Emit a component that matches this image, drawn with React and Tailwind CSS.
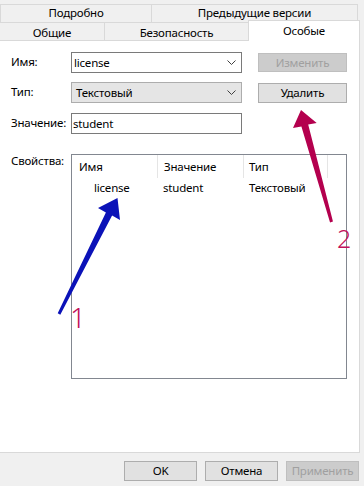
import React from "react";

function Chevron() {
  return (
    <svg width="9" height="5" viewBox="0 0 9 5" className="ml-auto mr-[5px] shrink-0">
      <polyline points="0.5,0.5 4.5,4.5 8.5,0.5" fill="none" stroke="#404040" strokeWidth="1" />
    </svg>
  );
}

export default function App() {
  return (
    <div className="relative w-[364px] h-[486px] bg-[#f0f0f0] overflow-hidden text-[11.5px] tracking-[-0.2px] leading-none text-black font-['Noto_Sans',sans-serif]">
      {/* Tabs */}
      <div className="pt-[4px]">
        <div className="flex h-[19px]">
          <div className="w-[152px] border border-[#d9d9d9] flex items-center justify-center pb-[1px]">Подробно</div>
          <div className="w-[206px] border border-l-0 border-[#d9d9d9] flex items-center justify-center pb-[1px]">Предыдущие версии</div>
        </div>
        <div className="flex h-[17px]">
          <div className="w-[105px] border-r border-[#d9d9d9] flex items-center justify-center pt-[2px]">Общие</div>
          <div className="w-[143px] flex items-center justify-center pt-[2px]">Безопасность</div>
          <div className="relative z-10 w-[112px] h-[21px] -mt-[3px] bg-white border border-b-0 border-[#d9d9d9] flex items-center justify-center pb-[1px]">Особые</div>
        </div>
      </div>

      {/* Panel */}
      <div className="w-[360px] h-[413px] bg-white border-t border-r border-b border-[#d9d9d9] pt-[11px]">
        {/* Row 1 */}
        <div className="flex items-center h-[21px]">
          <div className="w-[71px] pl-[11px] pb-[1px]">Имя:</div>
          <div className="w-[171px] h-[21px] border border-[#7a7a7a] bg-white flex items-center pl-[2px]">
            <span>license</span>
            <Chevron />
          </div>
          <div className="ml-[16px] w-[89px] h-[19px] border border-[#bfbfbf] bg-[#cccccc] text-[#a0a0a0] flex items-center justify-center">Изменить</div>
        </div>
        {/* Row 2 */}
        <div className="flex items-center h-[21px] mt-[9px]">
          <div className="w-[71px] pl-[11px] pb-[1px]">Тип:</div>
          <div className="w-[171px] h-[21px] border border-[#adadad] bg-[#e5e5e5] flex items-center pl-[4px]">
            <span>Текстовый</span>
            <Chevron />
          </div>
          <div className="ml-[16px] w-[89px] h-[20px] border border-[#adadad] bg-[#e1e1e1] flex items-center justify-center">Удалить</div>
        </div>
        {/* Row 3 */}
        <div className="flex items-center h-[21px] mt-[10px]">
          <div className="w-[71px] pl-[11px] pb-[1px]">Значение:</div>
          <div className="w-[171px] h-[21px] border border-[#7a7a7a] bg-white flex items-center pl-[1px]">student</div>
        </div>
        {/* Row 4 */}
        <div className="flex items-start mt-[20px]">
          <div className="w-[71px] pl-[11px] pt-[1px]">Свойства:</div>
          <div className="w-[276px] h-[225px] border border-[#828790] bg-white">
            <div className="flex h-[23px]">
              <div className="w-[86px] border-r border-[#e5e5e5] pl-[7px] flex items-center">Имя</div>
              <div className="w-[86px] border-r border-[#e5e5e5] pl-[6px] flex items-center">Значение</div>
              <div className="w-[84px] border-r border-[#e5e5e5] pl-[5px] flex items-center">Тип</div>
            </div>
            <div className="flex h-[20px] items-center">
              <div className="w-[86px] pl-[22px]">license</div>
              <div className="w-[86px] pl-[5px]">student</div>
              <div className="w-[84px] pl-[5px]">Текстовый</div>
            </div>
          </div>
        </div>
      </div>

      {/* Footer */}
      <div className="flex justify-end gap-[8px] pr-[5px] mt-[8px]">
        <div className="w-[73px] h-[20px] border border-[#adadad] bg-[#e1e1e1] flex items-center justify-center">OK</div>
        <div className="w-[73px] h-[20px] border border-[#adadad] bg-[#e1e1e1] flex items-center justify-center">Отмена</div>
        <div className="w-[73px] h-[20px] border border-[#bfbfbf] bg-[#cccccc] text-[#a0a0a0] flex items-center justify-center">Применить</div>
      </div>

      {/* Annotations */}
      <svg className="absolute left-0 top-0 pointer-events-none" width="364" height="486" viewBox="0 0 364 486">
        <polygon
          points="57.7,313.3 105.9,212.4 98,208 117.5,198 120,220 112.1,215.6 60.3,314.7"
          fill="#0b12b8"
        />
        <polygon
          points="330.05,222.4 301.4,126.4 293,128 301,110 316.7,123 308.2,124.6 332.95,221.6"
          fill="#b4004e"
        />
        <text x="78" y="328" textAnchor="middle" fontSize="28" fontFamily="'Noto Sans', sans-serif" fontWeight="300" fill="#c2105a">1</text>
        <text x="344" y="248" textAnchor="middle" fontSize="25" fontFamily="'Noto Sans', sans-serif" fontWeight="300" fill="#c2105a">2</text>
      </svg>
    </div>
  );
}
